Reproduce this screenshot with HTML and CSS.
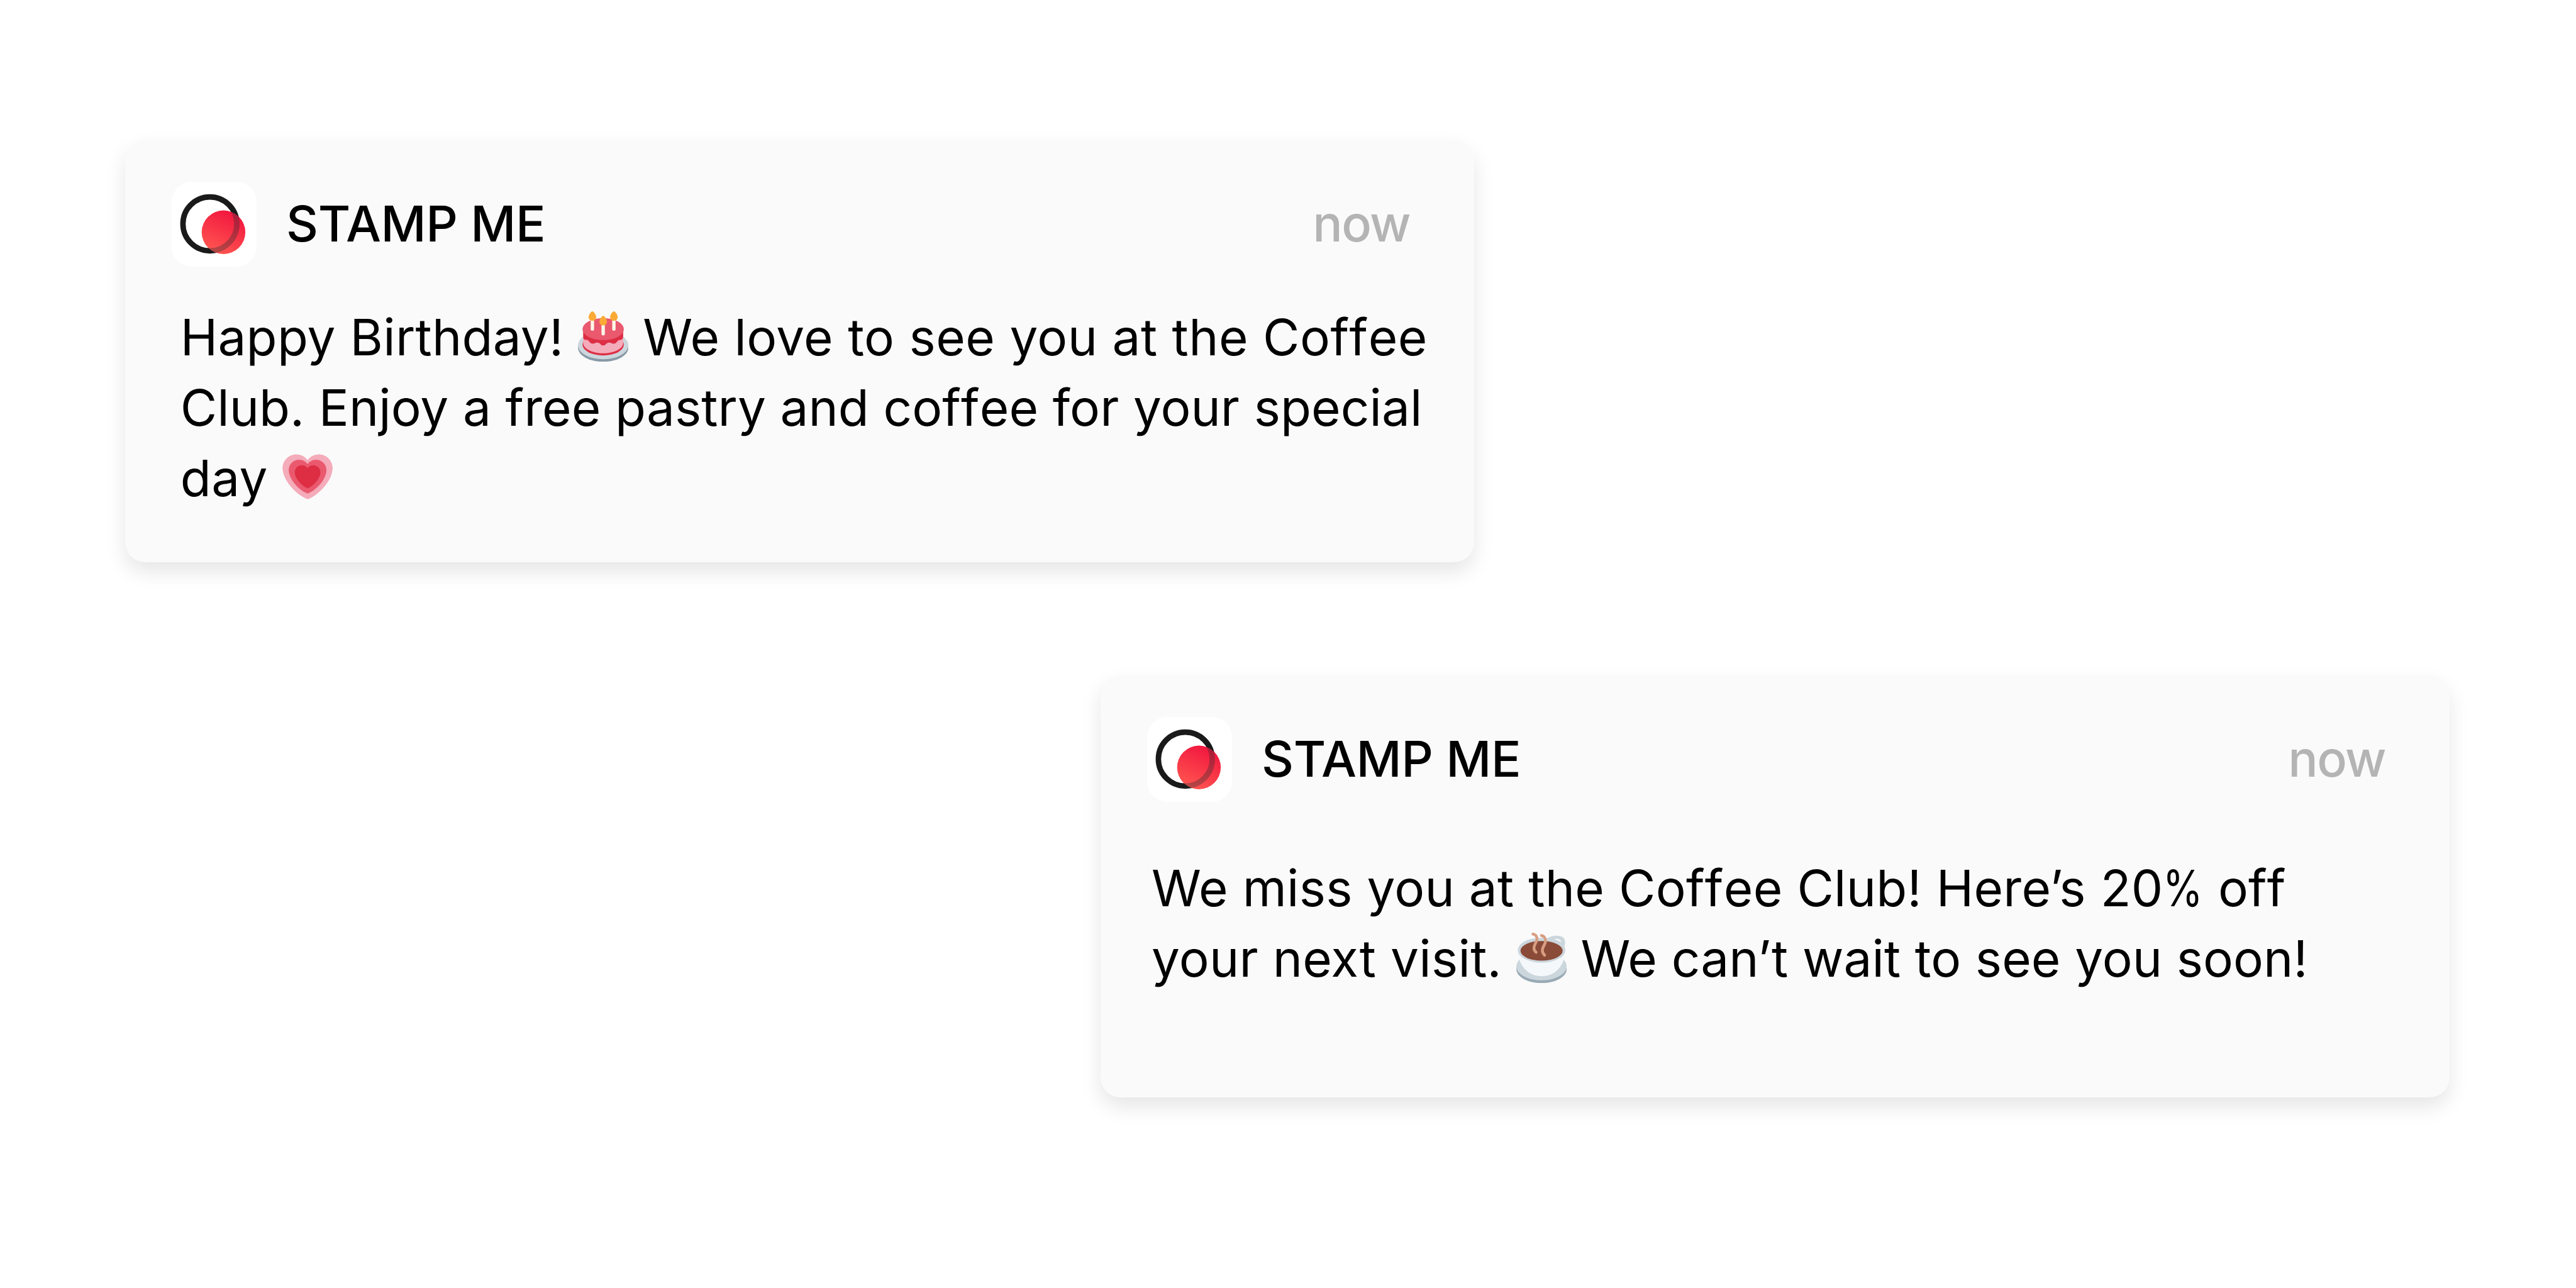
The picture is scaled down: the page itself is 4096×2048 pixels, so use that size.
FILE: index.html
```html
<!DOCTYPE html>
<html lang="en">
  <head>
    <meta charset="UTF-8" />
    <meta name="viewport" content="width=device-width, initial-scale=1.0" />
    <title>Stamp Me Notifications</title>
    <link rel="stylesheet" href="styles.css">
  </head>
  <body>
    <!-- shared shapes -->
    <svg class="defs" width="0" height="0">
      <defs>
        <linearGradient id="logo-red" x1="0.25" y1="0.95" x2="0.65" y2="0.05">
          <stop offset="0" stop-color="#ff5550" />
          <stop offset="1" stop-color="#f2183f" />
        </linearGradient>
        <clipPath id="logo-dot">
          <circle cx="152" cy="148" r="64" />
        </clipPath>
        <symbol id="logo" viewBox="0 0 249 249">
          <circle cx="112" cy="123.5" r="79" fill="none" stroke="#1a1a1a" stroke-width="16" />
          <circle cx="152" cy="148" r="64" fill="url(#logo-red)" />
          <circle cx="112" cy="123.5" r="79" fill="none" stroke="#1a2a30" stroke-opacity="0.32" stroke-width="16" clip-path="url(#logo-dot)" />
        </symbol>
        <path id="heart" d="M35.885 11.833c0-5.45-4.418-9.868-9.867-9.868-3.308 0-6.227 1.633-8.018 4.129-1.791-2.496-4.71-4.129-8.017-4.129-5.45 0-9.868 4.417-9.868 9.868 0 .772.098 1.52.266 2.241C1.751 22.587 11.216 31.568 18 34.034c6.783-2.466 16.249-11.447 17.617-19.959.17-.721.268-1.469.268-2.242z" />
      </defs>
    </svg>

    <div class="notification">
      <div class="header">
        <svg class="logo"><use href="#logo" /></svg>
        <span class="app-name">STAMP ME</span>
        <span class="time">now</span>
      </div>
      <p class="message">
        <span class="greeting">Happy Birthday!
        <svg class="emoji" viewBox="0 0 36 36">
          <ellipse cx="18" cy="26" rx="18" ry="10" fill="#8899a6" />
          <ellipse cx="18" cy="24.2" rx="18" ry="10" fill="#ccd6dd" />
          <ellipse cx="18" cy="23.8" rx="14.75" ry="7.7" fill="#dd2e44" />
          <path fill="#f4abba" d="M3.75 13v9.7c0 4 6.4 7.3 14.25 7.3s14.25-3.3 14.25-7.3V13z" />
          <path fill="#dd2e44" d="M3.75 13v5.9c.4 1 1 1.6 1.8 1.5 2.4-.4 2.6 2.7 4.8 2.7 1.5 0 1.9-.8 3.6-.8 1.9 0 2.2 2.1 4.05 2.1s2.15-2.1 4.05-2.1c1.7 0 2.1.8 3.6.8 2.2 0 2.2-2.8 4.6-2.7 1 0 1.5-.7 2-1.7V13z" />
          <ellipse cx="18" cy="12.75" rx="14.75" ry="7.8" fill="#ea596e" />
          <path stroke="#fff8e8" stroke-width="2.4" stroke-linecap="round" d="M10.3 5v7.65M18 8v8M25.65 5v7.65" />
          <g fill="#faaa35">
            <path d="M13 4.1c0 1.5-1.1 2.65-2.7 2.65S7.6 5.6 7.6 4.1 9.3 0 10.3 0 13 2.6 13 4.1z" />
            <path d="M20.7 7.4c0 1.5-1.1 2.65-2.7 2.65s-2.7-1.15-2.7-2.65S17 3.3 18 3.3s2.7 2.6 2.7 4.1z" />
            <path d="M28.35 4.1c0 1.5-1.1 2.65-2.7 2.65s-2.7-1.15-2.7-2.65S24.65 0 25.65 0s2.7 2.6 2.7 4.1z" />
          </g>
        </svg>
        </span><span class="wide">We love to see you at the Co<span class="ff">ff</span>ee</span><br />
        Club. Enjoy a free pastry and co<span class="ff">ff</span>ee for your special<br />
        <span class="wide">day </span><svg class="emoji" viewBox="0 0 36 36">
          <use href="#heart" fill="#f4abba" />
          <use href="#heart" fill="#ea596e" transform="translate(4.45 4.36) scale(.753)" />
          <use href="#heart" fill="#dd2e44" transform="translate(8.77 8.72) scale(.513)" />
        </svg>
      </p>
    </div>

    <div class="notification second">
      <div class="header">
        <svg class="logo"><use href="#logo" /></svg>
        <span class="app-name">STAMP ME</span>
        <span class="time">now</span>
      </div>
      <p class="message">
        <span class="greeting">We miss you at the Co<span class="ff">ff</span>ee Club! Here’s 20<span class="percent">%</span></span> o<span class="ff">ff</span><br />
        <span class="greeting">your next visit. </span><svg class="emoji" viewBox="0 0 36 36">
          <ellipse cx="18" cy="26" rx="18" ry="10" fill="#99aab5" />
          <ellipse cx="18" cy="24.05" rx="18" ry="10" fill="#ccd6dd" />
          <path fill="#f5f8fa" d="M1.2 13c0 9 6 18.05 16.9 18.05S34.9 22 34.9 13z" />
          <path fill="#ccd6dd" d="M22.3 3.9c2-1.2 4-1.8 6.2-1.8 4.2 0 6.3 1.6 6.3 4.6 0 1.2-.1 2.1-.4 3.3L29 8z" />
          <ellipse cx="18.05" cy="12.5" rx="17" ry="8.9" fill="#ccd6dd" />
          <path fill="#fafafa" d="M26.9 4.6c2.2-.6 5.2 0 5.1 2.5-1.3-1.1-3-1.9-5.1-2.5z" />
          <ellipse cx="18.05" cy="12.95" rx="15.05" ry="7.05" fill="#8a4b38" />
          <path fill="none" stroke="#d99e82" stroke-width="2" stroke-linecap="round" d="M11.9 1c2 .2 2.9 2 2.9 3.6 0 2.2-2.2 3.6-2.2 6.4 0 1.2.4 2 1.5 3M17.9 2c2 .2 3 2.3 3 3.9 0 2.4-2.3 4-2.3 6.8 0 1.4.5 2.3 1.6 3.4" />
        </svg>
        We can’t wait to see you soon!
      </p>
    </div>
  </body>
</html>
```

FILE: styles.css
```css
* {
  box-sizing: border-box;
}
body {
  font-family: Inter, Roboto, "Liberation Sans", sans-serif;
  margin: 0;
  height: 2048px;
  padding: 223px 201px 0 199px;
  background: #fff;
  color: #000;
  display: flex;
  flex-direction: column;
  gap: 180px;
  overflow: hidden;
}
.defs {
  position: absolute;
}
.notification {
  width: 2145px;
  height: 671px;
  flex: none;
  padding: 66px 0 0 74px;
  background: #fafafa;
  border-radius: 32px;
  box-shadow: 0 15px 32px rgba(0, 0, 0, 0.1);
}
.second {
  align-self: flex-end;
}
.header {
  display: flex;
  align-items: center;
  height: 135px;
  padding-right: 102px;
}
.logo {
  width: 135px;
  height: 135px;
  border-radius: 32px;
  background: #fff;
}
.app-name,
.time {
  margin-top: -3px;
  font-size: 79px;
  font-weight: 500;
}
.app-name {
  margin-left: 47px;
  letter-spacing: -0.4px;
}
.time {
  margin-left: auto;
  letter-spacing: -1.6px;
  color: #b4b4b4;
}
.message {
  margin: 56px 0 0 13.7px;
  font-size: 80px;
  line-height: 111.8px;
  letter-spacing: 0.08px;
  white-space: nowrap;
}
.second .message {
  margin: 81px 0 0 7px;
}
.greeting {
  letter-spacing: 0.28px;
}
.wide {
  letter-spacing: 0.48px;
}
.ff {
  font-kerning: none;
}
/* narrower percent sign */
.percent {
  display: inline-block;
  margin-right: -14px;
  transform: scaleX(0.81);
  transform-origin: left;
}
.emoji {
  width: 80.2px;
  height: 80.2px;
  vertical-align: -10px;
}
```
